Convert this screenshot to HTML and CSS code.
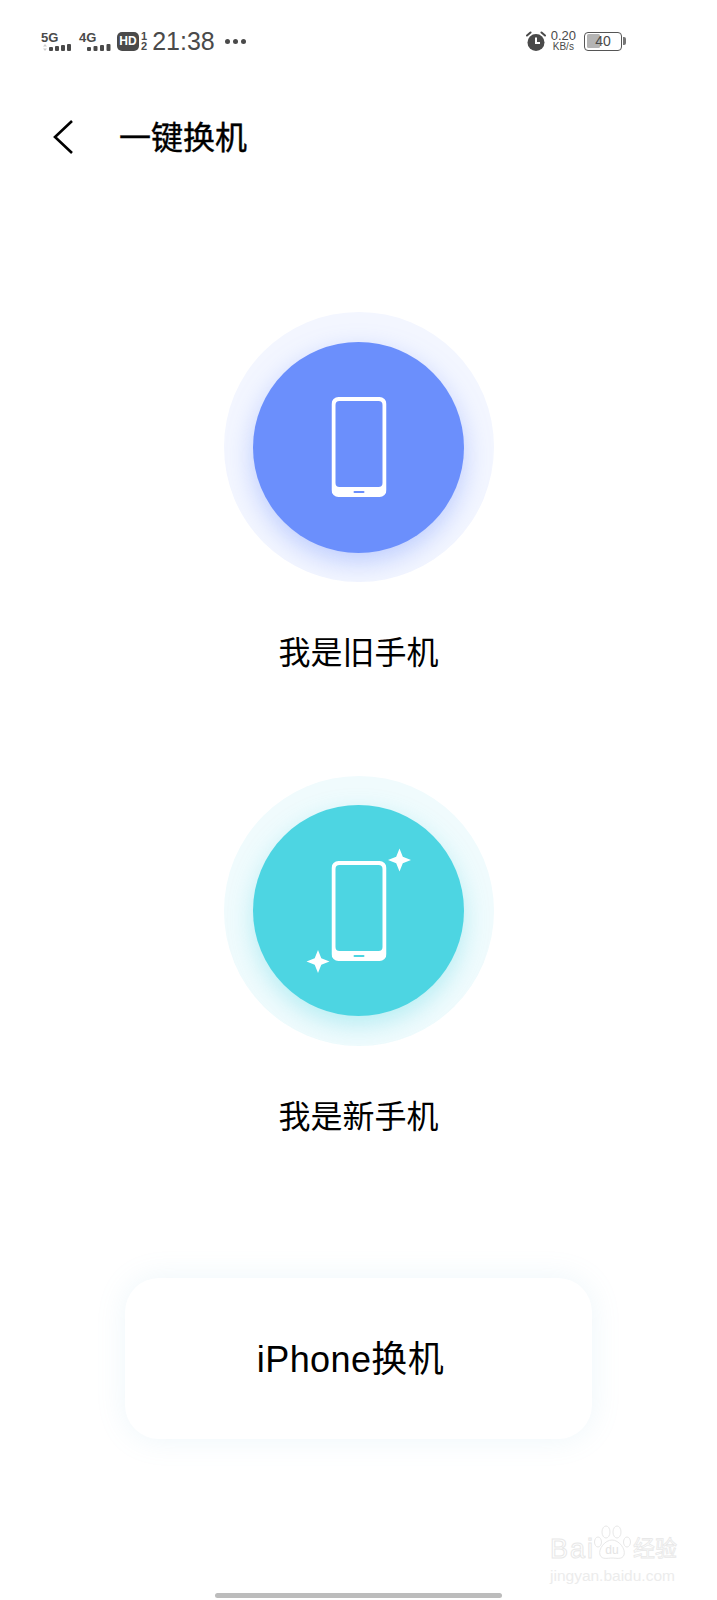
FILE: index.html
```html
<!DOCTYPE html>
<html lang="zh-CN">
<head>
    <meta charset="UTF-8">
    <meta name="viewport" content="width=device-width, initial-scale=1.0">
    <title>一键换机</title>
    <link rel="stylesheet" href="styles.css">
</head>
<body>
    <svg class="defs" width="0" height="0">
        <symbol id="phone" viewBox="0 0 55 100">
            <path fill="#fff" fill-rule="evenodd" d="M7 0H48A7 7 0 0 1 55 7V93A7 7 0 0 1 48 100H7A7 7 0 0 1 0 93V7A7 7 0 0 1 7 0ZM8 4A4 4 0 0 0 4 8V86A4 4 0 0 0 8 90H47A4 4 0 0 0 51 86V8A4 4 0 0 0 47 4Z"/>
            <rect class="phone-notch" x="22" y="94" width="11" height="2" rx="1"/>
        </symbol>
    </svg>

    <div class="page">
        <!-- 状态栏 -->
        <div class="status-bar">
            <div class="status-left">
                <div class="net">
                    <span class="net-name">5G</span>
                    <svg class="net-bars" width="32" height="7" viewBox="0 0 32 7">
                        <path fill="#ccc" d="M4 0 6 2.500H2ZM4 7 2 4.500H6Z"/>
                        <rect x="8" y="3" width="4" height="4" rx="1"/>
                        <rect x="14" y="2" width="4" height="5" rx="1"/>
                        <rect x="20" y="1" width="4" height="6" rx="1"/>
                        <rect x="26" y="0" width="4" height="7" rx="1"/>
                    </svg>
                </div>
                <div class="net net-second">
                    <span class="net-name">4G</span>
                    <svg class="net-bars" width="26" height="7" viewBox="0 0 26 7">
                        <rect x="1" y="3" width="4" height="4" rx="1"/>
                        <rect x="7.500" y="2" width="4" height="5" rx="1"/>
                        <rect x="14" y="1" width="4" height="6" rx="1"/>
                        <rect x="20.500" y="0" width="4" height="7" rx="1"/>
                    </svg>
                </div>
                <span class="hd-badge">HD</span>
                <div class="sim-slots"><span>1</span><span>2</span></div>
                <span class="clock">21:38</span>
                <div class="more-dots"><i></i><i></i><i></i></div>
            </div>
            <div class="status-right">
                <svg class="alarm" width="20" height="20" viewBox="0 0 20 20">
                    <circle cx="10" cy="11.500" r="8.500" fill="#4a4a4a"/>
                    <path d="M1 4.500 4.500 1.500M19 4.500 15.500 1.500" stroke="#4a4a4a" stroke-width="2" stroke-linecap="round" fill="none"/>
                    <path d="M10 6.500V12H14" stroke="#fff" stroke-width="2" fill="none"/>
                </svg>
                <div class="speed"><span>0.20</span><span class="speed-unit">KB/s</span></div>
                <div class="battery">
                    <div class="battery-level"></div>
                    <span class="battery-text">40</span>
                </div>
            </div>
        </div>

        <!-- 标题 -->
        <div class="top-bar">
            <svg class="back" width="22" height="36" viewBox="0 0 22 36">
                <path d="M20 2 3 18 20 34" stroke="#000" stroke-width="2.600" fill="none"/>
            </svg>
            <h1>一键换机</h1>
        </div>

        <div class="role old-phone">
            <div class="halo">
                <div class="disc">
                    <svg class="role-icon" width="120" height="130" viewBox="0 0 120 130">
                        <use href="#phone" x="32.500" y="15" width="55" height="100"/>
                    </svg>
                </div>
            </div>
            <div class="role-label">我是旧手机</div>
        </div>

        <div class="role new-phone">
            <div class="halo">
                <div class="disc">
                    <svg class="role-icon" width="120" height="130" viewBox="0 0 120 130">
                        <use href="#phone" x="32.500" y="15" width="55" height="100"/>
                        <path fill="#fff" d="M100.500 2.500 103.800 10.700 112 14 103.800 17.300 100.500 25.500 97.200 17.300 89 14 97.200 10.700Z"/>
                        <path fill="#fff" d="M19 104 22.300 112.200 30.500 115.500 22.300 118.800 19 127 15.700 118.800 7.500 115.500 15.700 112.200Z"/>
                    </svg>
                </div>
            </div>
            <div class="role-label">我是新手机</div>
        </div>

        <div class="iphone-card">iPhone换机</div>

        <div class="home-bar"></div>

        <!-- 水印 -->
        <div class="watermark">
            <div class="wm-top">
                <span class="wm-latin">Bai</span>
                <svg class="wm-paw" width="40" height="36" viewBox="0 0 40 36">
                    <g fill="#fff" stroke="#e8e8e8" stroke-width="1">
                        <ellipse cx="5" cy="17" rx="3.500" ry="5"/>
                        <ellipse cx="13" cy="7" rx="4" ry="6"/>
                        <ellipse cx="24" cy="7" rx="4" ry="6"/>
                        <ellipse cx="34" cy="17" rx="3.500" ry="5"/>
                        <path d="M19 15C26 15 33 24 31 30 29 35 23 33 19 33 15 33 9 35 7 30 5 24 12 15 19 15Z"/>
                    </g>
                    <text x="19" y="29" class="wm-du">du</text>
                </svg>
                <span class="wm-cn">经验</span>
            </div>
            <div class="wm-url">jingyan.baidu.com</div>
        </div>
    </div>
</body>
</html>
```

FILE: styles.css
```css
* {
    box-sizing: border-box;
}

body {
    margin: 0;
    background: #fff;
    color: #000;
    font-family: "Liberation Sans", "Noto Sans CJK SC", sans-serif;
}

.defs {
    display: block;
    height: 0;
}

.page {
    position: relative;
    width: 717px;
    height: 1600px;
    overflow: hidden;
}

/* status bar */
.status-bar {
    display: flex;
    justify-content: space-between;
    align-items: center;
    height: 22px;
    margin-top: 30px;
    padding: 0 95px 0 41px;
    color: #4a4a4a;
}

.status-left,
.status-right {
    display: flex;
    align-items: center;
}

.net {
    display: flex;
    flex-direction: column;
    width: 38px;
}

.net-name {
    font-size: 13px;
    font-weight: bold;
    line-height: 11px;
}

.net-bars {
    fill: #4a4a4a;
    margin-top: 1px;
}

.net-second .net-bars {
    margin-left: 7px;
}

.hd-badge {
    width: 22px;
    height: 19px;
    border-radius: 5px;
    background: #4a4a4a;
    color: #fff;
    font-size: 12px;
    font-weight: bold;
    line-height: 19px;
    text-align: center;
}

.sim-slots {
    display: flex;
    flex-direction: column;
    margin-left: 2px;
    font-size: 11px;
    font-weight: bold;
    line-height: 10px;
}

.clock {
    margin-left: 5px;
    font-size: 25px;
    line-height: 22px;
}

.more-dots {
    display: flex;
    gap: 3px;
    margin-left: 10px;
}

.more-dots i {
    width: 5px;
    height: 5px;
    border-radius: 50%;
    background: #4a4a4a;
}

.speed {
    display: flex;
    flex-direction: column;
    align-items: center;
    margin-left: 5px;
    font-size: 13px;
    line-height: 12px;
}

.speed-unit {
    font-size: 10px;
    line-height: 10px;
}

.battery {
    position: relative;
    width: 38px;
    height: 19px;
    margin-left: 8px;
    border: 1.500px solid #555;
    border-radius: 4px;
    padding: 1.500px;
}

.battery::after {
    content: "";
    position: absolute;
    top: 4px;
    right: -4.500px;
    width: 2.500px;
    height: 8px;
    border-radius: 0 2px 2px 0;
    background: #777;
}

.battery-level {
    width: 42%;
    height: 100%;
    border-radius: 1.500px;
    background: #b4b4b4;
}

.battery-text {
    position: absolute;
    top: 0;
    left: 0;
    width: 100%;
    font-size: 14px;
    line-height: 16px;
    text-align: center;
    color: #4a4a4a;
}

/* title */
.top-bar {
    display: flex;
    align-items: center;
    height: 40px;
    margin-top: 67px;
    padding-left: 52px;
}

.back {
    margin-bottom: 4px;
}

.top-bar h1 {
    margin: 0 0 2px 45px;
    font-size: 32px;
    font-weight: 400;
    line-height: 40px;
    -webkit-text-stroke: 0.4px #000;
}

/* old / new phone */
.role {
    display: flex;
    flex-direction: column;
    align-items: center;
}

.old-phone {
    margin-top: 153px;
}

.new-phone {
    margin-top: 102.500px;
}

.halo {
    display: flex;
    align-items: center;
    justify-content: center;
    width: 270px;
    height: 270px;
    border-radius: 50%;
    overflow: hidden;
}

.disc {
    display: flex;
    align-items: center;
    justify-content: center;
    width: 211px;
    height: 211px;
    border-radius: 50%;
}

.old-phone .halo {
    background: #f3f6ff;
}

.old-phone .disc {
    background: #6b8ffc;
    box-shadow: 0 9px 26px rgba(107, 143, 252, 0.4);
    --notch: #6b8ffc;
}

.new-phone .halo {
    background: #f0fbfd;
}

.new-phone .disc {
    background: #4dd5e2;
    box-shadow: 0 9px 24px rgba(77, 213, 226, 0.36);
    --notch: #4dd5e2;
}

.phone-notch {
    fill: var(--notch);
}

.role-label {
    margin-top: 51px;
    font-size: 32px;
    line-height: 40px;
}

/* iphone card */
.iphone-card {
    width: 467px;
    height: 161px;
    margin: 141.500px 0 0 125px;
    padding: 3px 16px 0 0;
    border-radius: 34px;
    background: #fff;
    box-shadow: 0 0 30px rgba(130, 190, 220, 0.14);
    font-size: 36px;
    letter-spacing: 0.400px;
    line-height: 158px;
    text-align: center;
}

.home-bar {
    position: absolute;
    left: 215px;
    bottom: 2px;
    width: 287px;
    height: 5px;
    border-radius: 3px;
    background: #bcbcbc;
}

/* watermark lies over the page */
.watermark {
    position: absolute;
    left: 550px;
    top: 1523px;
    width: 128px;
}

.wm-top {
    display: flex;
    align-items: flex-end;
    height: 38px;
}

.wm-latin {
    width: 43px;
    font-size: 27px;
    line-height: 24px;
    letter-spacing: 2px;
    color: #fff;
    -webkit-text-stroke: 1px #e8e8e8;
}

.wm-paw {
    flex: none;
}

.wm-du {
    font-size: 12px;
    text-anchor: middle;
    fill: #e4e4e4;
    stroke: none;
}

.wm-cn {
    font-size: 22px;
    line-height: 24px;
    color: #fff;
    -webkit-text-stroke: 0.8px #e8e8e8;
}

.wm-url {
    margin-top: 7px;
    font-size: 15.500px;
    line-height: 16px;
    white-space: nowrap;
    color: #ececec;
}
```
